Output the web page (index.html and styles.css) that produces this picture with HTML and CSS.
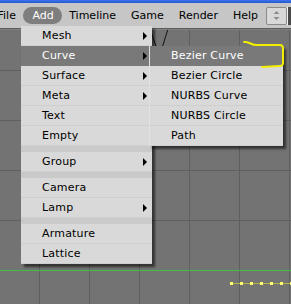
FILE: index.html
```html
<!DOCTYPE html>
<html lang="en">

<head>
    <meta charset="UTF-8">
    <title>Add menu</title>
    <link rel="stylesheet" href="styles.css">
</head>

<body>
    <div class="titlebar"></div>

    <header class="header">
        <span class="menuitem first">File</span>
        <span class="menuitem active">Add</span>
        <span class="menuitem">Timeline</span>
        <span class="menuitem">Game</span>
        <span class="menuitem">Render</span>
        <span class="menuitem">Help</span>
        <span class="spinbutton">
            <svg width="7" height="9" viewBox="0 0 7 9">
                <path d="M3.5 0 L6.5 3 L0.5 3 Z M3.5 9 L6.5 6 L0.5 6 Z" fill="#8c8c8c" />
            </svg>
        </span>
        <span class="nextbutton"></span>
    </header>

    <div class="viewport">
        <!-- scene contents drawn on the 3d view -->
        <svg class="scene" width="291" height="274" viewBox="0 30 291 274">
            <path d="M151 32 L156 46" stroke="#111" stroke-width="1" fill="none" />
            <path d="M168 29 L162 48" stroke="#111" stroke-width="1" fill="none" />
            <rect x="0" y="270" width="291" height="1" fill="#3fbf3f" />
            <rect x="231" y="283" width="60" height="1" fill="#b5b548" />
            <g fill="#ffff70">
                <rect x="230" y="282" width="3" height="3" />
                <rect x="240" y="282" width="3" height="3" />
                <rect x="250" y="282" width="3" height="3" />
                <rect x="260" y="282" width="3" height="3" />
                <rect x="270" y="282" width="3" height="3" />
                <rect x="280" y="282" width="3" height="3" />
                <rect x="290" y="282" width="3" height="3" />
            </g>
        </svg>

        <ul class="popup main">
            <li class="row sub">Mesh</li>
            <li class="row sub hover">Curve</li>
            <li class="row sub">Surface</li>
            <li class="row sub">Meta</li>
            <li class="row">Text</li>
            <li class="row">Empty</li>
            <li class="sep"></li>
            <li class="row sub">Group</li>
            <li class="sep"></li>
            <li class="row">Camera</li>
            <li class="row sub">Lamp</li>
            <li class="sep"></li>
            <li class="row">Armature</li>
            <li class="row">Lattice</li>
        </ul>

        <ul class="popup curves">
            <li class="row hover">Bezier Curve</li>
            <li class="row">Bezier Circle</li>
            <li class="row">NURBS Curve</li>
            <li class="row">NURBS Circle</li>
            <li class="row">Path</li>
        </ul>

        <!-- hand drawn marker round the chosen item -->
        <svg class="marker" width="291" height="274" viewBox="0 30 291 274">
            <path d="M244 42 C248 41 251 45 256 45 L280 45 Q283 45 283 49 L283 63 Q283 66 279 66 L262 67"
                stroke="#f2ee00" stroke-width="2" fill="none" stroke-linecap="round" />
        </svg>
    </div>
</body>

</html>
```

FILE: styles.css
```css
body {
    margin: 0;
    width: 291px;
    height: 304px;
    overflow: hidden;
    font-family: 'DejaVu Sans', 'Liberation Sans', sans-serif;
    font-size: 11px;
    background-color: #737373;
}

.titlebar {
    height: 3px;
    background: linear-gradient(#3d74ec, #2458d2);
}

.header {
    display: flex;
    align-items: center;
    height: 25px;
    background-color: #c6c6c6;
    border-bottom: 1px solid #5c5c5c;
    white-space: nowrap;
}

.menuitem {
    display: flex;
    align-items: center;
    height: 17px;
    padding: 0 7.5px;
    color: #000;
}

.menuitem.first {
    margin-left: -10px;
}

.menuitem.active {
    padding: 0 8px 0 9px;
    background-color: #7e7e7e;
    border-radius: 9px;
    color: #fff;
}

.spinbutton {
    display: flex;
    align-items: center;
    justify-content: center;
    box-sizing: border-box;
    width: 21px;
    height: 18px;
    margin-left: auto;
    background-color: #d8d8d8;
    border: 1px solid #8a8a8a;
    border-radius: 2px;
}

.nextbutton {
    box-sizing: border-box;
    width: 4px;
    height: 18px;
    border-left: 1px solid #f4f4f4;
    background-color: #4a4a4a;
}

.viewport {
    position: relative;
    height: 275px;
    border-top: 1px solid #808080;
    background-color: #737373;
    background-image:
        linear-gradient(to right, #5f5f5f 1px, transparent 1px),
        linear-gradient(to bottom, #5f5f5f 1px, transparent 1px);
    background-size: 50px 50px;
    background-position: 39px 0, 0 40px;
}

.scene,
.marker {
    position: absolute;
    left: 0;
    top: 0;
}

.popup {
    position: absolute;
    margin: 0;
    padding: 0;
    list-style: none;
    background-color: #d9d9d9;
    box-shadow: 3px 3px 2px rgba(0, 0, 0, .55);
}

.popup.main {
    left: 21px;
    top: -4px;
    width: 131px;
}

.popup.curves {
    left: 149px;
    top: 16px;
    width: 134px;
    border-left: 1px solid #e2e2e2;
    box-sizing: border-box;
}

.row {
    position: relative;
    box-sizing: border-box;
    height: 20px;
    line-height: 19px;
    padding-left: 21px;
    border-bottom: 1px solid #cfcfcf;
    color: #000;
    letter-spacing: 0.2px;
}

.row.hover {
    background-color: #797979;
    border-bottom-color: #797979;
    color: #fff;
}

.sub::after {
    content: "";
    position: absolute;
    right: 5px;
    top: 6px;
    border-left: 4px solid #000;
    border-top: 4px solid transparent;
    border-bottom: 4px solid transparent;
}

.sep {
    height: 6px;
    background-color: #cacaca;
}
```
